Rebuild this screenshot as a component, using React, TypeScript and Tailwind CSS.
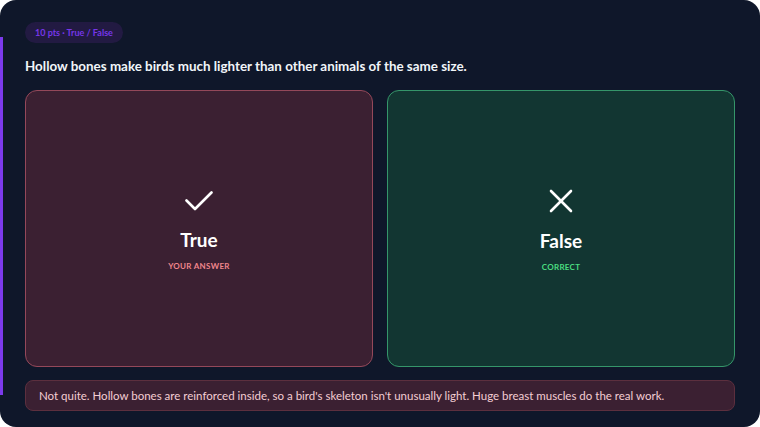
import * as React from 'react';

const font = { fontFamily: 'Lato, "Noto Sans", sans-serif' };

function CheckIcon() {
  return (
    <svg width="28" height="22" viewBox="0 0 28 22" fill="none" stroke="currentColor" strokeWidth="2.6" strokeLinecap="round" strokeLinejoin="round">
      <path d="M1.5 10.5 10 19 26.5 2.5" />
    </svg>
  );
}

function XIcon() {
  return (
    <svg width="24" height="24" viewBox="0 0 24 24" fill="none" stroke="currentColor" strokeWidth="2.6" strokeLinecap="round" strokeLinejoin="round">
      <path d="M2 2 22 22" />
      <path d="M22 2 2 22" />
    </svg>
  );
}

export default function App() {
  return (
    <div className="w-[760px] h-[427px] bg-white" style={font}>
      <div className="relative w-full h-full rounded-2xl bg-[#0f172a] px-[25px] pt-[22px] pb-[16px] flex flex-col">
        {/* Accent bar */}
        <div className="absolute left-0 top-[37px] bottom-[32px] w-[3px] bg-[#7c3aed]" />

        <div className="flex">
          <span className="flex items-center h-[21px] px-[10px] rounded-full bg-[#221a42] text-[#7636e8] text-[9px] font-bold leading-none">
            10 pts · True / False
          </span>
        </div>

        <h2 className="mt-[13px] text-[13.4px] font-bold text-[#f1f5f9] leading-[20px]">
          Hollow bones make birds much lighter than other animals of the same size.
        </h2>

        <div className="mt-[14px] grid grid-cols-2 gap-[14px] h-[277px] shrink-0">
          <div className="rounded-xl border-[1.5px] border-[#94485a] bg-[#3b2032] flex flex-col items-center justify-center text-white">
            <div className="mt-[3px]"><CheckIcon /></div>
            <div className="mt-[16px] text-[19px] font-bold leading-[24px]">True</div>
            <div className="mt-[9px] text-[8px] font-bold tracking-[0.3px] leading-[10px] text-[#f0868c] uppercase">Your answer</div>
          </div>
          <div className="rounded-xl border-[1.5px] border-[#35966a] bg-[#123632] flex flex-col items-center justify-center text-white">
            <div className="mt-[3px]"><XIcon /></div>
            <div className="mt-[16px] text-[19px] font-bold leading-[24px]">False</div>
            <div className="mt-[9px] text-[8px] font-bold tracking-[0.3px] leading-[10px] text-[#4ade80] uppercase">Correct</div>
          </div>
        </div>

        <div className="mt-[13px] h-[31px] shrink-0 flex items-center rounded-lg border border-[#5c2f3e] bg-[#3b2032] px-[13px] text-[11.5px] text-[#f4cdd3]">
          Not quite. Hollow bones are reinforced inside, so a bird's skeleton isn't unusually light. Huge breast muscles do the real work.
        </div>
      </div>
    </div>
  );
}
